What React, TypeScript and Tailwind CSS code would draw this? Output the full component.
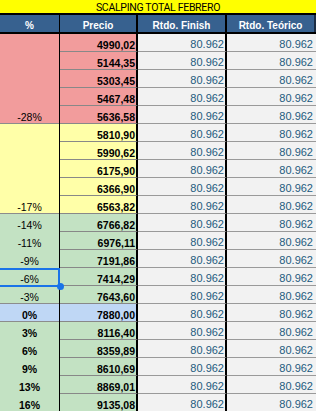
import React from "react";

const precios: string[] = [
  "4990,02", "5144,35", "5303,45", "5467,48", "5636,58",
  "5810,90", "5990,62", "6175,90", "6366,90", "6563,82",
  "6766,82", "6976,11", "7191,86", "7414,29", "7643,60",
  "7880,00",
  "8116,40", "8359,89", "8610,69", "8869,01", "9135,08",
];

const rowBg = (i: number) => {
  if (i < 5) return "bg-[#f29c9c]";
  if (i < 10) return "bg-[#ffffa8]";
  if (i === 15) return "bg-[#bfd7f5]";
  return "bg-[#c3e2c3]";
};

type PctCell = { label: string; h: string; bg: string; line: boolean; bold: boolean };

const pctCells: PctCell[] = [
  { label: "-28%", h: "h-[90px]", bg: "bg-[#f29c9c]", line: true, bold: false },
  { label: "-17%", h: "h-[90px]", bg: "bg-[#ffffa8]", line: true, bold: false },
  { label: "-14%", h: "h-[18px]", bg: "bg-[#c3e2c3]", line: false, bold: false },
  { label: "-11%", h: "h-[18px]", bg: "bg-[#c3e2c3]", line: false, bold: false },
  { label: "-9%", h: "h-[18px]", bg: "bg-[#c3e2c3]", line: false, bold: false },
  { label: "-6%", h: "h-[18px]", bg: "bg-[#c3e2c3]", line: false, bold: false },
  { label: "-3%", h: "h-[18px]", bg: "bg-[#c3e2c3]", line: true, bold: false },
  { label: "0%", h: "h-[18px]", bg: "bg-[#bfd7f5]", line: true, bold: true },
  { label: "3%", h: "h-[18px]", bg: "bg-[#c3e2c3]", line: false, bold: true },
  { label: "6%", h: "h-[18px]", bg: "bg-[#c3e2c3]", line: false, bold: true },
  { label: "9%", h: "h-[18px]", bg: "bg-[#c3e2c3]", line: false, bold: true },
  { label: "13%", h: "h-[18px]", bg: "bg-[#c3e2c3]", line: false, bold: true },
  { label: "16%", h: "h-[18px]", bg: "bg-[#c3e2c3]", line: false, bold: true },
];

const sans = "font-['Liberation_Sans',Arial,sans-serif]";

export default function App() {
  return (
    <div className={`w-[316px] h-[411px] overflow-hidden bg-white ${sans}`}>
      {/* Title */}
      <div className="h-[15px] bg-[#ffff00] border-b-2 border-black flex items-end justify-center">
        <span className="font-['Roboto',sans-serif] text-[10.5px] leading-none tracking-[-0.3px] text-black">
          SCALPING TOTAL FEBRERO
        </span>
      </div>
      {/* Header */}
      <div className="h-[19px] bg-[#37618f] border-b-2 border-black flex text-white font-bold text-[10px] leading-none">
        <div className="w-[60px] border-r border-black flex items-end justify-center pb-px">%</div>
        <div className="w-[78px] border-r-2 border-black flex items-end justify-center pb-px">Precio</div>
        <div className="w-[89px] border-r-2 border-black flex items-end justify-center pb-px">Rtdo. Finish</div>
        <div className="w-[89px] border-r-2 border-[#1c2d44] flex items-end justify-center pb-px">Rtdo. Teórico</div>
      </div>
      {/* Body */}
      <div className="relative flex">
        <div className="w-[60px] border-r border-black flex flex-col shrink-0">
          {pctCells.map((c, i) => (
            <div
              key={i}
              className={`${c.h} ${c.bg} border-b ${c.line ? "border-[#8c8c8c]" : "border-transparent"} flex items-end justify-center pb-px text-[10.5px] leading-none text-black ${c.bold ? "font-bold" : ""}`}
            >
              {c.label}
            </div>
          ))}
        </div>
        <div className="flex flex-col w-[256px]">
          {precios.map((p, i) => (
            <div key={i} className="flex h-[18px]">
              <div
                className={`w-[78px] ${rowBg(i)} border-r-2 border-r-black border-b border-b-[#888888] flex items-end justify-end pr-px pb-px text-[10.5px] leading-none font-bold text-black`}
              >
                {p}
              </div>
              <div className="w-[89px] bg-[#f2f2f2] border-r-2 border-r-black border-b border-b-[#9a9a9a] flex items-end justify-end pr-px pb-px text-[11px] leading-none text-[#245b7e]">
                80.962
              </div>
              <div className="w-[89px] bg-[#f2f2f2] border-b border-b-[#9a9a9a] flex items-end justify-end pr-[3px] pb-px text-[11px] leading-none text-[#245b7e]">
                80.962
              </div>
            </div>
          ))}
        </div>
        {/* Selection overlay */}
        <div className="absolute left-[-2px] top-[234px] w-[62px] h-[19px] border-2 border-[#1a73e8] pointer-events-none" />
        <div className="absolute left-[57px] top-[249px] w-[7px] h-[7px] rounded-full bg-[#1a73e8] pointer-events-none" />
      </div>
    </div>
  );
}
